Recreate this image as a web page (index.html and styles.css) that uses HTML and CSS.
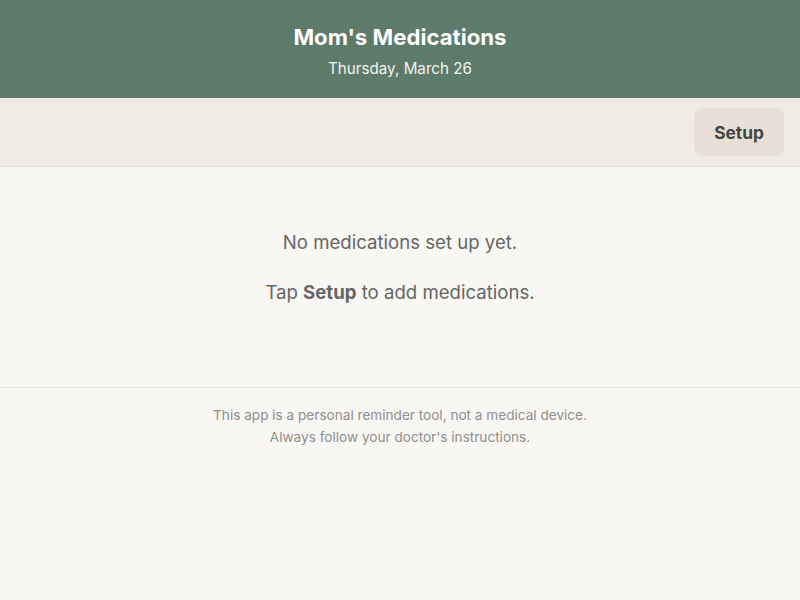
FILE: index.html
```html
<!DOCTYPE html>
<html lang="en">
<head>
  <meta charset="UTF-8" />
  <meta name="viewport" content="width=device-width, initial-scale=1.0"/>
  <title>Mom's Medications</title>
  <link rel="stylesheet" href="styles.css">
</head>
<body>

  <header class="app-header">
    <h1>Mom's Medications</h1>
    <div class="today">Thursday, March 26</div>
  </header>

  <div class="toolbar">
    <button class="setup-btn">Setup</button>
  </div>

  <main class="empty-state">
    <p>No medications set up yet.</p>
    <p>Tap <strong>Setup</strong> to add medications.</p>
  </main>

  <footer class="disclaimer">
    <p>This app is a personal reminder tool, not a medical device.</p>
    <p>Always follow your doctor's instructions.</p>
  </footer>

</body>
</html>
```

FILE: styles.css
```css
* {
  box-sizing: border-box;
  margin: 0;
  padding: 0;
}

body {
  font-family: Inter, 'Noto Sans', sans-serif;
  background: #f8f7f3;
  color: #555;
}

.app-header {
  background: #5e7a6a;
  color: #fff;
  text-align: center;
  height: 98px;
  padding-top: 22px;
}

.app-header h1 {
  font-size: 22.2px;
  font-weight: 700;
  line-height: 30px;
}

.today {
  font-size: 15.2px;
  line-height: 20px;
  margin-top: 7px;
  color: #f2f4f2;
}

.toolbar {
  display: flex;
  justify-content: flex-end;
  padding: 10px 16px;
  background: #f0ece5;
  border-bottom: 1px solid #dcdad5;
}

.setup-btn {
  font-family: inherit;
  font-size: 17.3px;
  font-weight: 700;
  color: #444;
  background: #e8e0d6;
  border: none;
  border-radius: 8px;
  width: 90px;
  height: 48px;
  cursor: pointer;
}

.empty-state {
  text-align: center;
  font-size: 18.6px;
  line-height: 28px;
  padding: 61px 20px 81px;
  color: #666;
}

.empty-state p + p {
  margin-top: 22px;
}

.empty-state strong {
  font-weight: 700;
}

.disclaimer {
  border-top: 1px solid #e8e6e1;
  text-align: center;
  font-size: 13.6px;
  line-height: 22px;
  padding: 16px 20px;
  color: #8e8e8e;
}
```
